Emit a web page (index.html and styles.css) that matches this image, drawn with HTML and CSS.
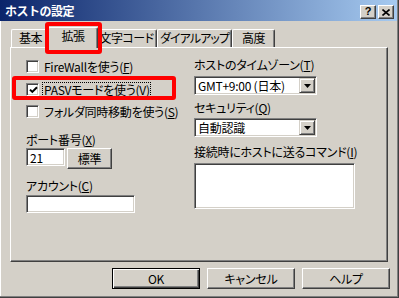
FILE: index.html
```html
<!DOCTYPE html>
<html lang="ja">
<head>
<meta charset="utf-8">
<title>ホストの設定</title>
<link rel="stylesheet" href="styles.css">
</head>
<body>
<div class="dialog">
  <div class="titlebar">
    <span class="title">ホストの設定</span>
    <div class="tbtns">
      <span class="tbtn help">?</span>
      <span class="tbtn close"><svg width="8" height="7" viewBox="0 0 8 7"><path d="M0.5 0.5 L7.5 6.5 M7.5 0.5 L0.5 6.5" stroke="#000" stroke-width="1.6"/></svg></span>
    </div>
  </div>
  <div class="content">
    <div class="tabs">
      <div class="tab t1">基本</div>
      <div class="tab t2 active">拡張</div>
      <div class="tab t3">文字コード</div>
      <div class="tab t4">ダイアルアップ</div>
      <div class="tab t5">高度</div>
    </div>
    <div class="panel">
      <div class="col left">
        <div class="check r1"><span class="box"></span><span class="lbl">FireWallを使う(<u>F</u>)</span></div>
        <div class="check r2"><span class="box"><svg width="9" height="9" viewBox="0 0 9 9"><path d="M1 3.6 L3.3 5.9 L8 1.2" fill="none" stroke="#000" stroke-width="2"/></svg></span><span class="lbl focus">PASVモードを使う(<u>V</u>)</span></div>
        <div class="check r3"><span class="box"></span><span class="lbl">フォルダ同時移動を使う(<u>S</u>)</span></div>
        <div class="label port-label">ポート番号(<u>X</u>)</div>
        <div class="port-row">
          <div class="field port">21</div>
          <div class="btn std">標準</div>
        </div>
        <div class="label acct-label">アカウント(<u>C</u>)</div>
        <div class="field acct"></div>
      </div>
      <div class="col right">
        <div class="label">ホストのタイムゾーン(<u>T</u>)</div>
        <div class="combo tz"><span class="value">GMT+9:00 (日本)</span><span class="drop"><svg width="7" height="4" viewBox="0 0 7 4"><path d="M0 0 H7 L3.5 4 Z" fill="#000"/></svg></span></div>
        <div class="label sec-label">セキュリティ(<u>Q</u>)</div>
        <div class="combo sec"><span class="value">自動認識</span><span class="drop"><svg width="7" height="4" viewBox="0 0 7 4"><path d="M0 0 H7 L3.5 4 Z" fill="#000"/></svg></span></div>
        <div class="label cmd-label">接続時にホストに送るコマンド(<u>I</u>)</div>
        <div class="field cmd"></div>
      </div>
    </div>
    <div class="buttons">
      <div class="btn big default">OK</div>
      <div class="btn big">キャンセル</div>
      <div class="btn big">ヘルプ</div>
    </div>
  </div>
  <div class="hl hl-tab"></div>
  <div class="hl hl-pasv"></div>
</div>
</body>
</html>
```
FILE: styles.css
```css
* { box-sizing: border-box; }
html, body { margin: 0; padding: 0; background: #d4d0c8; }
body {
  font-family: "Noto Sans CJK JP", "Liberation Sans", sans-serif;
  font-size: 12px;
  line-height: 14px;
  color: #000;
  font-feature-settings: "palt";
  letter-spacing: -0.25px;
}
u { text-decoration: underline; text-underline-offset: 1px; }

.dialog {
  position: relative;
  width: 399px;
  height: 298px;
  background: #d4d0c8;
  border-right: 1px solid #404040;
  border-bottom: 1px solid #404040;
  box-shadow: inset -1px -1px #808080, inset 1px 0 #ffffff;
  overflow: hidden;
}

.titlebar {
  height: 21px;
  margin-right: 1px;
  background: linear-gradient(to right, #0a246a, #a6caf0);
  display: flex;
  align-items: flex-start;
  padding: 0 3px 0 5px;
}
.title {
  color: #fff;
  font-weight: bold;
  font-size: 12px;
  line-height: 14px;
  margin-top: 4px;
  letter-spacing: -0.5px;
  font-feature-settings: "palt" 0;
}
.tbtns {
  margin-left: auto;
  margin-top: 5px;
  display: flex;
  gap: 2px;
}
.tbtn {
  width: 16px;
  height: 14px;
  background: #d4d0c8;
  border: 1px solid;
  border-color: #fff #404040 #404040 #fff;
  box-shadow: inset -1px -1px #808080;
  display: flex;
  align-items: center;
  justify-content: center;
}
.tbtn.help {
  font-family: "Liberation Sans", sans-serif;
  font-weight: bold;
  font-size: 11px;
  line-height: 11px;
  padding-bottom: 1px;
}

.content {
  padding: 6px 0 0 10px;
}

.tabs {
  display: flex;
  align-items: flex-end;
  height: 20px;
  padding-left: 1px;
}
.tab {
  height: 18px;
  border-top: 1px solid #fff;
  border-left: 1px solid #fff;
  border-right: 1px solid #404040;
  box-shadow: inset -1px 0 #808080;
  border-radius: 2px 2px 0 0;
  text-align: center;
  padding-top: 1px;
  background: #d4d0c8;
  white-space: nowrap;
  letter-spacing: -0.5px;
}
.t1 { width: 39px; }
.t2 { width: 46px; }
.t3 { width: 61px; }
.t4 { width: 75px; letter-spacing: -0.9px; }
.t5 { width: 43px; }
.tab.active {
  position: relative;
  z-index: 1;
  width: 50px;
  height: 21px;
  margin: 0 -2px -1px;
}

.panel {
  width: 378px;
  height: 215px;
  border: 1px solid;
  border-color: #fff #404040 #404040 #fff;
  box-shadow: inset -1px -1px #808080;
  display: grid;
  grid-template-columns: 168px 1fr;
  padding: 10px 0 0 15px;
}

.col { display: flex; flex-direction: column; align-items: flex-start; }
.col.left { padding-top: 1px; }

.check {
  display: flex;
  align-items: center;
  height: 15px;
  gap: 3px;
}
.check.r2 { margin-top: 8px; }
.check.r3 { margin-top: 7px; }
.box {
  width: 13px;
  height: 13px;
  background: #fff;
  border: 1px solid;
  border-color: #808080 #fff #fff #808080;
  box-shadow: inset 1px 1px #404040, inset -1px -1px #d4d0c8;
  display: flex;
  align-items: center;
  justify-content: center;
  padding: 1px 0 0 1px;
}
.lbl {
  padding: 0 1px 0 2px;
  line-height: 15px;
  white-space: nowrap;
}
.lbl.focus {
  outline: 1px dotted #000;
  outline-offset: -1px;
}

.label { white-space: nowrap; }
.port-label { margin-top: 14px; }
.port-row {
  display: flex;
  align-items: flex-start;
  gap: 2px;
  margin-top: 1px;
}
.acct-label { margin-top: 10px; }

.field {
  background: #fff;
  border: 1px solid;
  border-color: #808080 #fff #fff #808080;
  box-shadow: inset 1px 1px #404040, inset -1px -1px #d4d0c8;
  padding: 2px 3px;
}
.field.port { width: 39px; height: 18px; line-height: 14px; }
.field.acct { width: 109px; height: 18px; margin-top: 2px; }
.field.cmd { width: 161px; height: 46px; margin-top: 4px; }

.btn {
  background: #d4d0c8;
  border: 1px solid;
  border-color: #fff #404040 #404040 #fff;
  box-shadow: inset -1px -1px #808080;
  display: flex;
  align-items: center;
  justify-content: center;
}
.btn.std { width: 45px; height: 21px; }

.combo {
  width: 123px;
  height: 19px;
  background: #fff;
  border: 1px solid;
  border-color: #808080 #fff #fff #808080;
  box-shadow: inset 1px 1px #404040, inset -1px -1px #d4d0c8;
  display: flex;
  align-items: center;
  padding: 1px;
  margin-top: 4px;
}
.combo .value { flex: 1; padding-left: 2px; white-space: nowrap; }
.combo .drop {
  width: 16px;
  height: 15px;
  background: #d4d0c8;
  border: 1px solid;
  border-color: #d4d0c8 #404040 #404040 #d4d0c8;
  box-shadow: inset 1px 1px #fff, inset -1px -1px #808080;
  display: flex;
  align-items: center;
  justify-content: center;
}
.sec-label { margin-top: 6px; }
.combo.sec { margin-top: 3px; }
.cmd-label { margin-top: 8px; }

.buttons {
  display: flex;
  gap: 7px;
  margin-top: 6px;
  padding-left: 102px;
}
.btn.big { width: 88px; height: 21px; }
.btn.default {
  border: 1px solid #000;
  box-shadow: inset 1px 1px #fff, inset -1px -1px #404040, inset -2px -2px #808080;
}

.hl {
  position: absolute;
  border: 4px solid #ff0000;
  border-radius: 3px;
  z-index: 5;
}
.hl-tab { left: 45px; top: 22px; width: 57px; height: 32px; }
.hl-pasv { left: 12px; top: 76px; width: 164px; height: 24px; }
```
